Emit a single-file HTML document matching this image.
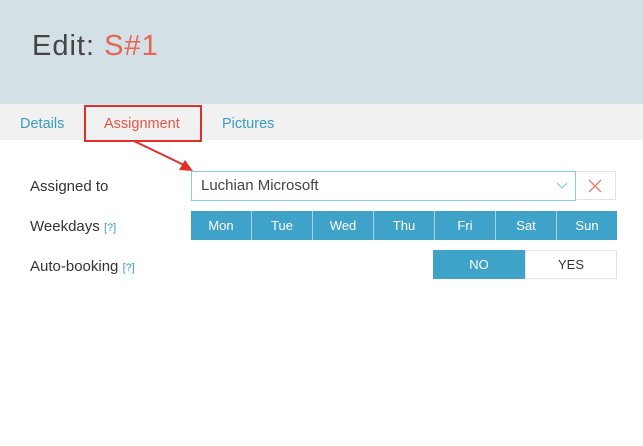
<!DOCTYPE html>
<html><head><style>
body{margin:0;width:643px;height:446px;background:#fff;font-family:"Liberation Sans",sans-serif;position:relative;overflow:hidden}
.hdr{position:absolute;left:0;top:0;width:643px;height:104px;background:#d3e1e7}
.hdr h1{position:absolute;left:32px;top:30px;margin:0;font-weight:normal;font-size:29px;color:#444;letter-spacing:1px}
.tabs{position:absolute;left:0;top:104px;width:643px;height:36px;background:#f1f1f1}
.t{position:absolute;top:12px;font-size:14.5px;color:#3a9cc2}
.lbl{position:absolute;left:30px;font-size:15px;color:#333}
.q{color:#3a9cc2;font-size:11px}
.days{position:absolute;left:191px;top:211px;width:426px;height:29px;display:flex;background:#3fa2c9}
.days div{flex:1;color:#fff;font-size:13px;text-align:center;line-height:29px;border-left:1px solid #a9d3e4}
.days div:first-child{border-left:none}
</style></head><body>
<div class="hdr"><h1>Edit: <span style="color:#e76452">S#1</span></h1></div>
<div class="tabs">
<span class="t" style="left:20px">Details</span>
<span class="t" style="left:104px;color:#e2574a">Assignment</span>
<span class="t" style="left:222px">Pictures</span>
</div>
<div style="position:absolute;left:84px;top:105px;width:114px;height:33px;border:2px solid #e1302a"></div>
<svg style="position:absolute;left:0;top:0" width="643" height="446"><line x1="134" y1="141" x2="184" y2="165" stroke="#e1302a" stroke-width="2"/><polygon points="193,171 179,170 185,160" fill="#e1302a"/></svg>
<div class="lbl" style="top:178px">Assigned to</div>
<div class="lbl" style="top:218px">Weekdays <span class="q">[?]</span></div>
<div class="lbl" style="top:258px">Auto-booking <span class="q">[?]</span></div>
<div style="position:absolute;left:191px;top:171px;height:28px;border:1px solid #8ccbe2;font-size:15px;color:#444;line-height:28px;padding-left:9px;width:374px">Luchian Microsoft</div>
<svg style="position:absolute;left:556px;top:182px" width="12" height="8"><polyline points="1,1 6,6 11,1" fill="none" stroke="#8ccbe2" stroke-width="1.2"/></svg>
<div style="position:absolute;left:576px;top:171px;width:40px;height:29px;border:1px solid #e4e4e4;border-left:none;box-sizing:border-box"></div>
<svg style="position:absolute;left:588px;top:179px" width="14" height="14"><path d="M1 1L13 13M13 1L1 13" stroke="#e87a6e" stroke-width="1.3"/></svg>
<div class="days"><div>Mon</div><div>Tue</div><div>Wed</div><div>Thu</div><div>Fri</div><div>Sat</div><div>Sun</div></div>
<div style="position:absolute;left:433px;top:250px;width:92px;height:29px;background:#3fa2c9;color:#fff;font-size:13px;text-align:center;line-height:29px">NO</div>
<div style="position:absolute;left:525px;top:250px;width:92px;height:29px;border:1px solid #e4e4e4;box-sizing:border-box;color:#333;font-size:13px;text-align:center;line-height:27px">YES</div>
</body></html>
